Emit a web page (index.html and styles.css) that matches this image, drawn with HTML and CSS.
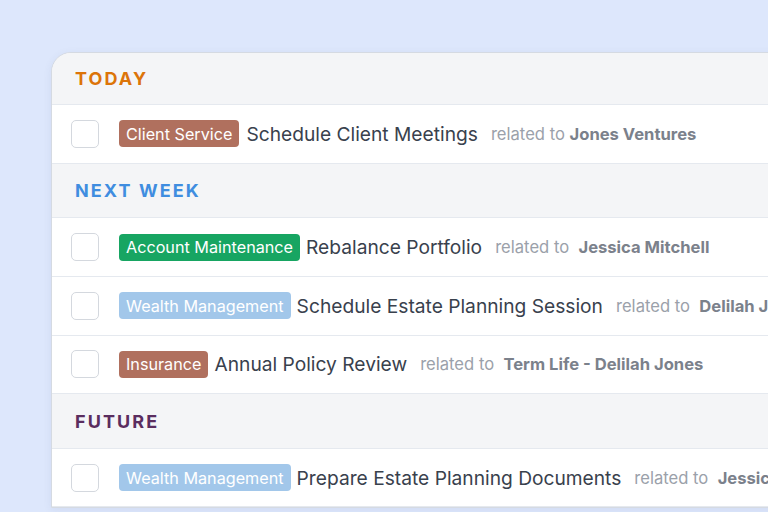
FILE: index.html
```html
<!DOCTYPE html>
<html>
<head>
<meta charset="utf-8">
<link rel="stylesheet" href="styles.css">
</head>
<body>
<div class="card">
  <div class="group-header first today">TODAY</div>
  <div class="task">
    <span class="check"></span>
    <span class="tag brown">Client Service</span>
    <span class="title wide">Schedule Client Meetings</span>
    <span class="rel">related to <b>Jones Ventures</b></span>
  </div>
  <div class="group-header next">NEXT WEEK</div>
  <div class="task">
    <span class="check"></span>
    <span class="tag green">Account Maintenance</span>
    <span class="title">Rebalance Portfolio</span>
    <span class="rel">related to&nbsp; <b>Jessica Mitchell</b></span>
  </div>
  <div class="task">
    <span class="check"></span>
    <span class="tag blue">Wealth Management</span>
    <span class="title">Schedule Estate Planning Session</span>
    <span class="rel">related to&nbsp; <b>Delilah Jones</b></span>
  </div>
  <div class="task">
    <span class="check"></span>
    <span class="tag brown">Insurance</span>
    <span class="title">Annual Policy Review</span>
    <span class="rel">related to&nbsp; <b>Term Life - Delilah Jones</b></span>
  </div>
  <div class="group-header future">FUTURE</div>
  <div class="task">
    <span class="check"></span>
    <span class="tag blue">Wealth Management</span>
    <span class="title">Prepare Estate Planning Documents</span>
    <span class="rel">related to&nbsp; <b>Jessica Mitchell</b></span>
  </div>
</div>
</body>
</html>
```
FILE: styles.css
```css
html, body {
  margin: 0;
  padding: 0;
  width: 768px;
  height: 512px;
  overflow: hidden;
  background: #dde7fc;
  font-family: Inter, "Noto Sans", sans-serif;
}
.card {
  margin: 52px 0 0 51px;
  width: 820px;
  background: #f4f5f7;
  border: 1px solid #d5dae2;
  border-top-left-radius: 20px;
  box-shadow: 0 2px 8px rgba(60, 80, 120, 0.08);
  overflow: hidden;
}
.group-header {
  height: 53.5px;
  display: flex;
  align-items: center;
  padding-left: 23px;
  font-size: 18px;
  font-weight: 700;
  letter-spacing: 2.1px;
  border-bottom: 1px solid #e5e9ef;
  background: #f4f5f7;
}
.group-header.first {
  height: 51px;
}
.today { color: #dc7409; }
.next { color: #3f8de0; }
.future { color: #5a2d5f; }
.task {
  height: 57.7px;
  display: flex;
  align-items: center;
  padding-left: 19px;
  background: #ffffff;
  border-bottom: 1px solid #e5e9ef;
  white-space: nowrap;
}
.check {
  flex: none;
  width: 26px;
  height: 26px;
  border: 1px solid #d4d8de;
  border-radius: 5px;
  background: #fff;
  margin-right: 20px;
}
.tag {
  flex: none;
  height: 27px;
  display: flex;
  align-items: center;
  padding: 0 7px;
  border-radius: 4px;
  color: #fff;
  font-size: 16.2px;
  margin-right: 6px;
}
.brown { background: #b0705e; }
.green { background: #17a562; }
.blue { background: #a2c7ea; }
.title {
  font-size: 19.2px;
  color: #39414d;
  margin-right: 13px;
}
.title.wide {
  margin-left: 1px;
}
.rel {
  font-size: 16.6px;
  color: #9ba1aa;
}
.rel b {
  color: #7b818b;
  font-weight: 700;
}
```
